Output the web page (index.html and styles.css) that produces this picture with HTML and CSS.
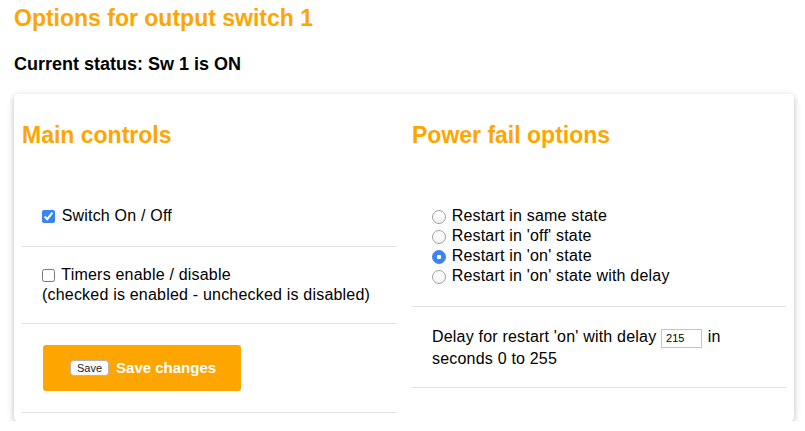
FILE: index.html
```html
<!DOCTYPE html>
<html lang="en">
<head>
    <meta charset="UTF-8">
    <meta name="viewport" content="width=device-width, initial-scale=1.0">
    <title>Switch options</title>
    <link rel="stylesheet" href="styles.css">
</head>
<body>
    <div class="page">
        <h1 class="title">Options for output switch 1</h1>
        <h4 class="status">Current status: Sw 1 is ON</h4>

        <form class="card" id="options-form">
            <div class="col">
                <h3 class="col-title">Main controls</h3>
                <ul class="opt-list">
                    <li class="opt">
                        <label><input type="checkbox" class="check" name="switch" checked> Switch On / Off</label>
                    </li>
                    <li class="opt opt-tight">
                        <label><input type="checkbox" class="check" name="timers"> Timers enable / disable</label><br>
                        (checked is enabled - unchecked is disabled)
                    </li>
                    <li class="opt opt-btn">
                        <span class="save-btn"><input type="submit" class="mini-btn" value="Save">Save changes</span>
                    </li>
                </ul>
            </div>

            <div class="col">
                <h3 class="col-title">Power fail options</h3>
                <ul class="opt-list">
                    <li class="opt">
                        <label><input type="radio" class="radio" name="pfail" value="0"> Restart in same state</label><br>
                        <label><input type="radio" class="radio" name="pfail" value="1"> Restart in 'off' state</label><br>
                        <label><input type="radio" class="radio" name="pfail" value="2" checked> Restart in 'on' state</label><br>
                        <label><input type="radio" class="radio" name="pfail" value="3"> Restart in 'on' state with delay</label>
                    </li>
                    <li class="opt opt-delay">
                        <span>Delay for restart 'on' with delay</span>
                        <input type="text" class="delay-input" name="delay" value="215">
                        <span>in</span>
                        <span>seconds 0 to 255</span>
                    </li>
                </ul>
            </div>
        </form>
    </div>
</body>
</html>
```

FILE: styles.css
```css
:root {
    --orange: #ffa500;
    --text-color: #000;
    --line-color: #e1e1e1;
    --check-blue: #3a82f7;
}

* {
    box-sizing: border-box;
}

body {
    margin: 0;
    background: #fff;
    color: var(--text-color);
    font-family: 'Liberation Sans', Arial, sans-serif;
}

.page {
    padding: 0 11px 0 14px;
}

.title {
    margin: 4px 0 0;
    font-size: 23px;
    line-height: 28px;
    font-weight: bold;
    color: var(--orange);
}

.status {
    margin: 21px 0 0;
    font-size: 18px;
    line-height: 22px;
    font-weight: bold;
}

/* card with the two option columns */
.card {
    margin-top: 19px;
    width: 780px;
    padding: 8px;
    display: grid;
    grid-template-columns: 1fr 1fr;
    gap: 16px;
    background: #fff;
    border-radius: 4px;
    box-shadow: 0 2px 5px 0 rgba(0, 0, 0, 0.16), 0 2px 10px 0 rgba(0, 0, 0, 0.12);
}

.col-title {
    margin: 19px 0 37px;
    font-size: 23px;
    line-height: 28px;
    font-weight: bold;
    color: var(--orange);
}

.opt-list {
    list-style: none;
    margin: 0;
    padding: 0;
}

.opt {
    padding: 20px;
    border-bottom: 1px solid var(--line-color);
    font-size: 16px;
    line-height: 20px;
    letter-spacing: 0.2px;
}

.opt-tight {
    padding: 18px 20px;
}

.opt-btn {
    padding: 21px 20px;
}

.opt-delay {
    padding: 19px 20px 18px;
    line-height: 21px;
}

.check {
    width: 13px;
    height: 13px;
    margin: 0 2px 0 0;
    vertical-align: -2px;
    accent-color: var(--check-blue);
}

.radio {
    appearance: none;
    -webkit-appearance: none;
    width: 14px;
    height: 14px;
    margin: 0 1px 0 0;
    vertical-align: -3px;
    border: 1px solid #a0a0a0;
    border-radius: 50%;
    background: linear-gradient(#fff, #f3f3f3);
}

.radio:checked {
    border-color: var(--check-blue);
    background: radial-gradient(circle, #fff 0 2px, var(--check-blue) 2.6px);
}

.save-btn {
    display: inline-flex;
    align-items: center;
    gap: 7px;
    height: 46px;
    margin-left: 1px;
    padding: 0 25px 0 27px;
    background: var(--orange);
    border-radius: 3px;
    color: #fff;
    font-size: 15px;
    font-weight: bold;
    letter-spacing: 0;
}

.mini-btn {
    height: 16px;
    padding: 0 6px;
    margin: 0;
    border: 1px solid #b5b5b5;
    border-radius: 4px;
    background: #fff;
    color: #222;
    font-family: 'Liberation Sans', Arial, sans-serif;
    font-size: 11px;
    line-height: 14px;
}

.delay-input {
    width: 41px;
    height: 19px;
    margin: 0 1px 0 0;
    padding: 0 4px;
    border: 1px solid #c4c4c4;
    border-radius: 0;
    font-family: 'Liberation Sans', Arial, sans-serif;
    font-size: 11px;
    letter-spacing: 0;
}
```
